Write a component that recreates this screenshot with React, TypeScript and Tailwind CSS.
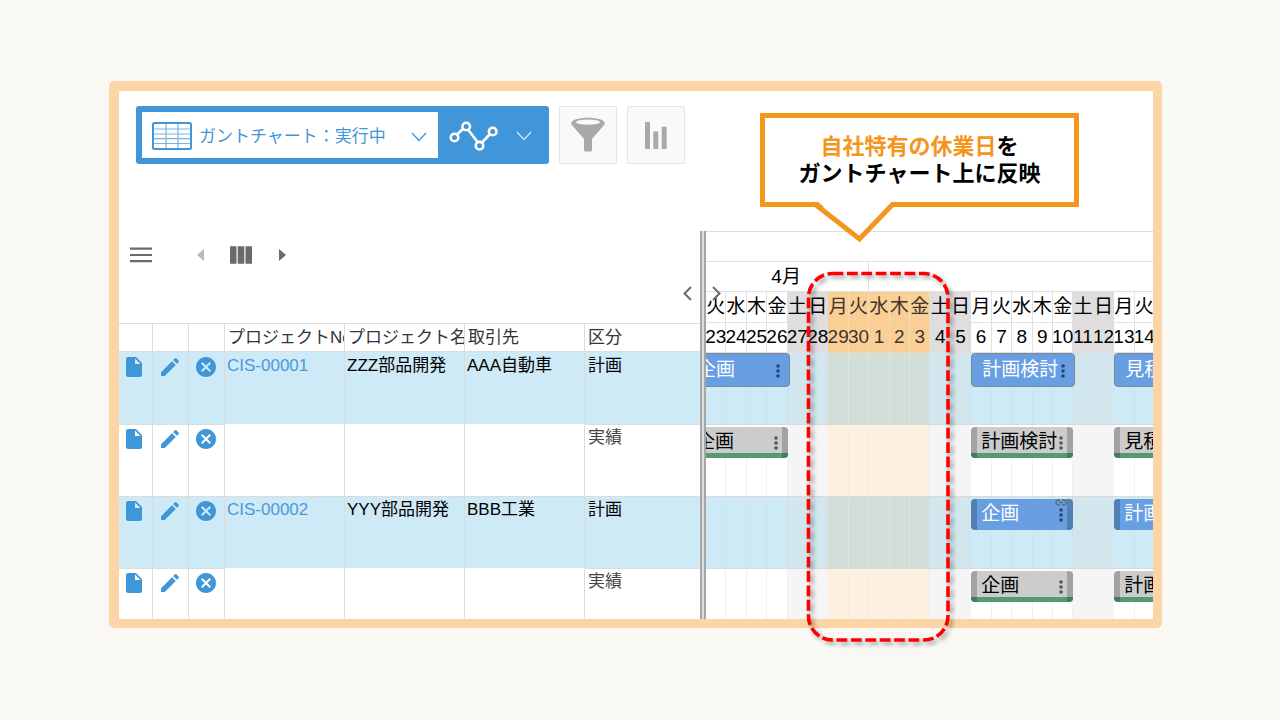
import { clsx } from 'clsx'
import { MdCancel, MdEdit, MdInsertDriveFile } from 'react-icons/md'

type DayKind = 'work' | 'weekend' | 'closed'
type BarStyle = 'selected' | 'plan' | 'actual'

interface Bar {
  label: string
  slot: 'first' | 'second' | 'third'
  linked?: boolean
}

interface Row {
  no?: string
  name?: string
  client?: string
  kind: '計画' | '実績'
  style: BarStyle
  bars: Bar[]
}

const WEEKDAYS = ['火', '水', '木', '金', '土', '日', '月']
const DATES = [23, 24, 25, 26, 27, 28, 29, 30, 1, 2, 3, 4, 5, 6, 7, 8, 9, 10, 11, 12, 13, 14]

const days = DATES.map((date, i) => {
  const weekday = WEEKDAYS[i % 7]
  let kind: DayKind = 'work'
  if (weekday === '土' || weekday === '日') kind = 'weekend'
  else if (i >= 6 && i <= 10) kind = 'closed'
  return { date, weekday, kind }
})

const rows: Row[] = [
  {
    no: 'CIS-00001',
    name: 'ZZZ部品開発',
    client: 'AAA自動車',
    kind: '計画',
    style: 'selected',
    bars: [
      { label: '企画', slot: 'first' },
      { label: '計画検討', slot: 'second' },
      { label: '見積', slot: 'third' },
    ],
  },
  {
    kind: '実績',
    style: 'actual',
    bars: [
      { label: '企画', slot: 'first' },
      { label: '計画検討', slot: 'second' },
      { label: '見積', slot: 'third' },
    ],
  },
  {
    no: 'CIS-00002',
    name: 'YYY部品開発',
    client: 'BBB工業',
    kind: '計画',
    style: 'plan',
    bars: [
      { label: '企画', slot: 'second', linked: true },
      { label: '計画', slot: 'third' },
    ],
  },
  {
    kind: '実績',
    style: 'actual',
    bars: [
      { label: '企画', slot: 'second' },
      { label: '計画', slot: 'third' },
    ],
  },
]

function Chevron({ className }: { className?: string }) {
  return (
    <svg viewBox="0 0 16 10" className={clsx('h-[10px] w-4', className)} fill="none" stroke="currentColor" strokeWidth="1.3">
      <path d="M1 1l7 7.5L15 1" />
    </svg>
  )
}

function SheetIcon() {
  return (
    <svg viewBox="0 0 40 28" className="h-7 w-10 shrink-0" fill="none" stroke="#3f96d8">
      <path d="M2 7h36M2 12h36M2 16.7h36M2 21.5h36M14 2v24M26 2v24" strokeWidth="1.2" opacity=".7" />
      <rect x="1" y="1" width="38" height="26" rx="1.5" strokeWidth="2" />
    </svg>
  )
}

function GraphIcon() {
  return (
    <svg viewBox="0 0 50 32" className="h-8 w-[50px]" fill="none" stroke="#fff" strokeWidth="2.6">
      <path d="M8 14.5L14.5 8.5M19 9.5L28.5 22M33.5 22L41.5 13.5" />
      <circle cx="5.5" cy="17.5" r="3.8" />
      <circle cx="17.2" cy="6.5" r="3.8" />
      <circle cx="30.5" cy="25.7" r="3.8" />
      <circle cx="43.7" cy="11.5" r="3.8" />
    </svg>
  )
}

function Toolbar() {
  return (
    <div className="flex gap-[10px] pl-[17px]">
      <div className="flex h-[58px] rounded-[3px] bg-[#4096d8] p-1.5">
        <label className="relative flex items-center bg-white pt-px pl-[10px] text-[#3f96d8]">
          <SheetIcon />
          <select
            aria-label="ビュー"
            className="h-full w-[246px] appearance-none bg-transparent pt-0.5 pl-[7px] text-[17px] outline-none"
          >
            <option>ガントチャート：実行中</option>
          </select>
          <Chevron className="pointer-events-none absolute top-5 right-[11px]" />
        </label>
        <button type="button" aria-label="グラフ" className="flex items-center gap-[17px] pt-0.5 pr-[11px] pl-[11px] text-[#cfe5f6]">
          <GraphIcon />
          <Chevron />
        </button>
      </div>
      <button
        type="button"
        aria-label="絞り込み"
        className="flex size-[58px] items-center justify-center border border-[#e1e6e8] bg-[#f8f9fb]"
      >
        <svg viewBox="0 0 34 36" className="h-9 w-[34px]">
          <path d="M.3 6C.3 3 7.5.7 17 .7S33.700 3 33.700 6c0 1.600-1 2.800-2.300 4L21 22v11c0 .8-.8 1.500-1.700 1.500h-4.600c-.9 0-1.700-.7-1.700-1.500V22L2.600 10C1.300 8.800.3 7.600.3 6z" fill="#a9a9a9" />
          <ellipse cx="17" cy="5.200" rx="12" ry="2.600" fill="#f8f9fb" />
        </svg>
      </button>
      <button
        type="button"
        aria-label="集計"
        className="flex size-[58px] items-center justify-center border border-[#e1e6e8] bg-[#f8f9fb]"
      >
        <svg viewBox="0 0 22 27" className="h-[27px] w-[22px]" fill="#a9a9a9">
          <path d="M0 0h5v27H0zM8.300 9.500h5V27h-5zM16.700 4.700h5V27h-5z" />
        </svg>
      </button>
    </div>
  )
}

function PaneControls() {
  return (
    <div className="flex h-[93px] items-start border-b border-[#dcdcdc] pt-3 pl-[10px] text-[#6b6b6b]">
      <button type="button" aria-label="メニュー" className="flex size-6 items-center justify-center">
        <svg viewBox="0 0 22 16" className="h-4 w-[22px]" stroke="currentColor" strokeWidth="2.200">
          <path d="M0 1.700h22M0 8h22M0 14.200h22" />
        </svg>
      </button>
      <div className="ml-[35px] flex items-center">
        <button type="button" aria-label="前へ" className="flex size-6 items-center justify-center text-[#b9b9b9]">
          <svg viewBox="0 0 7 12" className="h-3 w-[7px]" fill="currentColor">
            <path d="M7 0v12L0 6z" />
          </svg>
        </button>
        <button type="button" aria-label="列" className="mx-[17px] flex size-6 items-center justify-center">
          <svg viewBox="0 0 22 18" className="h-[18px] w-[22px]" fill="currentColor">
            <path d="M0 .3h6.500v17.400H0zM7.700.3h6.600v17.400H7.700zM15.500.3H22v17.400h-6.500z" />
          </svg>
        </button>
        <button type="button" aria-label="次へ" className="flex size-6 items-center justify-center">
          <svg viewBox="0 0 7 12" className="h-3 w-[7px]" fill="currentColor">
            <path d="M0 0v12l7-6z" />
          </svg>
        </button>
      </div>
      <button type="button" aria-label="左を閉じる" className="mt-[38px] mr-px ml-auto flex size-6 items-center justify-center">
        <svg viewBox="0 0 9 15" className="h-[15px] w-[9px]" fill="none" stroke="currentColor" strokeWidth="2">
          <path d="M8 1L1.500 7.500 8 14" />
        </svg>
      </button>
    </div>
  )
}

function ProjectTable() {
  return (
    <table className="w-full table-fixed border-separate border-spacing-0 text-left text-[17px] leading-6">
      <colgroup>
        <col className="w-[34px]" />
        <col className="w-9" />
        <col className="w-9" />
        <col className="w-[120px]" />
        <col className="w-[120px]" />
        <col className="w-[120px]" />
        <col />
      </colgroup>
      <thead>
        <tr className="h-7 text-[#333]">
          {['', '', '', 'プロジェクトNo', 'プロジェクト名', '取引先', '区分'].map((title, i) => (
            <th
              key={i}
              className="overflow-hidden border-r border-b border-[#dcdcdc] p-0 pl-[3px] font-normal whitespace-nowrap last:border-r-0"
            >
              {title}
            </th>
          ))}
        </tr>
      </thead>
      <tbody>
        {rows.map((row, i) => {
          const planned = row.kind === '計画'
          const edge = clsx('border-r border-[#dcdcdc] p-0 align-top', i === 0 ? 'border-t border-t-transparent' : 'border-t')
          const inner = clsx(
            'border-r border-t border-[#dcdcdc] p-0 pt-px pl-0.5 align-top',
            (i === 0 || !planned) && 'border-t-transparent',
          )
          return (
            <tr key={i} className={clsx(planned && 'bg-[#ceeaf6]', i === rows.length - 1 ? 'h-[51px]' : 'h-[72px]')}>
              <td className={edge}>
                <a href="#detail" aria-label="詳細" className="flex justify-center pt-[2px] pr-1 text-[#3f96d8]">
                  <MdInsertDriveFile size={24} />
                </a>
              </td>
              <td className={edge}>
                <a href="#edit" aria-label="編集" className="flex justify-center pt-[2px] pr-0.5 text-[#3f96d8]">
                  <MdEdit size={24} />
                </a>
              </td>
              <td className={edge}>
                <button type="button" aria-label="削除" className="flex w-full justify-center pt-[2px] pr-0.5 text-[#3f96d8]">
                  <MdCancel size={24} />
                </button>
              </td>
              <td className={inner}>
                {row.no && (
                  <a href="#project" className="text-[#4a98d9]">
                    {row.no}
                  </a>
                )}
              </td>
              <td className={inner}>{row.name}</td>
              <td className={inner}>{row.client}</td>
              <td
                className={clsx(
                  'border-t border-[#dcdcdc] p-0 pt-px pl-[3px] align-top',
                  i === 0 && 'border-t-transparent',
                  !planned && 'text-[#444]',
                )}
              >
                {row.kind}
              </td>
            </tr>
          )
        })}
      </tbody>
    </table>
  )
}

function TaskBar({ bar, style }: { bar: Bar; style: BarStyle }) {
  return (
    <div
      className={clsx(
        'relative row-start-1 flex items-center justify-between overflow-hidden rounded-[4px] pl-[10px] text-[19px] whitespace-nowrap',
        bar.slot === 'first' && 'col-start-1 col-span-4 -ml-5',
        bar.slot === 'second' && 'col-start-14 col-span-5',
        bar.slot === 'third' && 'col-start-21 col-span-2 -mr-16',
        style === 'selected' && 'h-[34px] border border-[#7b8794] bg-[#679fe2] pr-[9px] text-white',
        style === 'selected' && bar.slot !== 'third' && '-mr-0.5',
        style !== 'selected' && 'mt-[2px] h-[31px] pr-[10px]',
        style === 'plan' && 'bg-[#679fe2] text-white',
        style === 'actual' && 'bg-[#cccccc] text-black',
      )}
    >
      {style === 'actual' && <span className="absolute inset-x-0 bottom-0 h-[5px] bg-[#559a70]" />}
      {style !== 'selected' && <span className="absolute inset-0 border-x-[6px] border-black/20" />}
      <span className="relative">{bar.label}</span>
      <button
        type="button"
        aria-label="タスクメニュー"
        className={clsx('relative pt-px', style === 'actual' ? 'text-[#555]' : 'text-[#2c4664]')}
      >
        <svg viewBox="0 0 4 14" className="h-[14px] w-1" fill="currentColor">
          <circle cx="2" cy="2" r="1.800" />
          <circle cx="2" cy="7" r="1.800" />
          <circle cx="2" cy="12" r="1.800" />
        </svg>
      </button>
      {bar.linked && (
        <svg viewBox="0 0 12 7" className="absolute top-0 right-1.5 h-[7px] w-3" fill="none" stroke="#5f6b78" strokeWidth="1.300">
          <path d="M5 1H3.500a2.500 2.500 0 0 0 0 5H5M7 1h1.500a2.500 2.500 0 0 1 0 5H7M4 3.500h4" />
        </svg>
      )}
    </div>
  )
}

function Timeline() {
  return (
    <div className="overflow-hidden">
      <div className="w-full min-w-[449px]">
        <div className="border-t border-[#dcdcdc] text-[19px] leading-[30px] text-black">
          <div className="h-[30px] border-b border-[#e0e0e0]" />
          <div className="grid h-[30px] grid-cols-22 border-b border-[#e0e0e0]">
            <div className="col-span-8 border-r border-[#e0e0e0] pr-0.5 text-center">4月</div>
          </div>
          {(['weekday', 'date'] as const).map((field) => (
            <div key={field} className="grid h-[30px] grid-cols-22">
              {days.map((day, i) => (
                <div
                  key={i}
                  className={clsx(
                    'flex justify-center border-r border-b',
                    day.kind === 'work' && 'border-[#e2e2e2]',
                    day.kind === 'weekend' && 'border-[#dfdddd] bg-[#dfdddd]',
                    day.kind === 'closed' && 'border-[#f3dcbc] bg-[#f9cf95] text-[#3d352b]',
                  )}
                >
                  {day[field]}
                </div>
              ))}
            </div>
          ))}
        </div>
        {rows.map((row, i) => (
          <div
            key={i}
            className={clsx(
              'grid border-t',
              row.kind === '計画' && 'bg-[#ceeaf6]',
              i === 0 ? 'border-transparent' : 'border-[#dfd9d5]',
              i === rows.length - 1 ? 'h-[51px]' : 'h-[72px]',
            )}
          >
            <div className="grid grid-cols-22 [grid-area:1/1]">
              {days.map((day, j) => (
                <div
                  key={j}
                  className={clsx(
                    day.kind === 'work' && 'border-r border-[#c8d2d8]/30',
                    day.kind === 'weekend' && 'bg-[#dcdcdc]/29',
                    day.kind === 'closed' && 'border-r border-[#d8e4ea]/60 bg-[#f4ac53]/18 bg-clip-padding',
                  )}
                />
              ))}
            </div>
            <div className="grid grid-cols-22 items-start [grid-area:1/1]">
              {row.bars.map((bar) => (
                <TaskBar key={bar.slot} bar={bar} style={row.style} />
              ))}
            </div>
          </div>
        ))}
      </div>
    </div>
  )
}

function Callout() {
  return (
    <div className="absolute -top-[118px] left-[54px] w-[319px] border-[5px] border-[#f4961d] bg-white py-[15px] text-center text-[22px] leading-[27px] font-bold text-black">
      <p>
        <span className="text-[#f4961d]">自社特有の休業日</span>を
      </p>
      <p>ガントチャート上に反映</p>
      <svg viewBox="0 0 86 44" className="absolute top-[83px] left-[47px] h-11 w-[86px]" fill="#fff">
        <path d="M5 0L47.500 36 83 0z" />
        <path d="M2 3.500h1.500L47.500 38 80.500 3.500H84" fill="none" stroke="#f4961d" strokeWidth="5" />
      </svg>
    </div>
  )
}

function HolidayOutline() {
  return (
    <svg viewBox="0 0 156 384" className="pointer-events-none absolute top-[35px] left-[97px] h-96 w-[156px] drop-shadow-[3px_3px_2px_rgba(0,0,0,0.35)]">
      <rect x="5.500" y="7.500" width="139.500" height="366.500" rx="24" fill="none" stroke="#fe0000" strokeWidth="3.600" strokeDasharray="10.800 3.600" />
    </svg>
  )
}

export default function App() {
  return (
    <main className="min-h-screen bg-[#f9f8f3] pt-[81px] pr-[118px] pb-10 pl-[109px] font-['Liberation_Sans','Noto_Sans_CJK_JP',sans-serif] text-black">
      <div className="rounded-[5px] border-[10px] border-r-[9px] border-b-[9px] border-[#fbd5a5] bg-white pt-[15px]">
        <Toolbar />
        <div className="mt-[67px] flex">
          <section className="w-[581px] shrink-0">
            <PaneControls />
            <ProjectTable />
          </section>
          <div className="w-1.5 shrink-0 border-x-2 border-[#a6a6a6] bg-[#dcdcdc]" />
          <section className="relative min-w-0 flex-1">
            <Timeline />
            <button type="button" aria-label="右を閉じる" className="absolute top-[50px] left-[-2px] flex size-6 items-center justify-center text-[#6b6b6b]">
              <svg viewBox="0 0 9 15" className="h-[15px] w-[9px]" fill="none" stroke="currentColor" strokeWidth="2">
                <path d="M1 1l6.500 6.500L1 14" />
              </svg>
            </button>
            <Callout />
            <HolidayOutline />
          </section>
        </div>
      </div>
    </main>
  )
}
